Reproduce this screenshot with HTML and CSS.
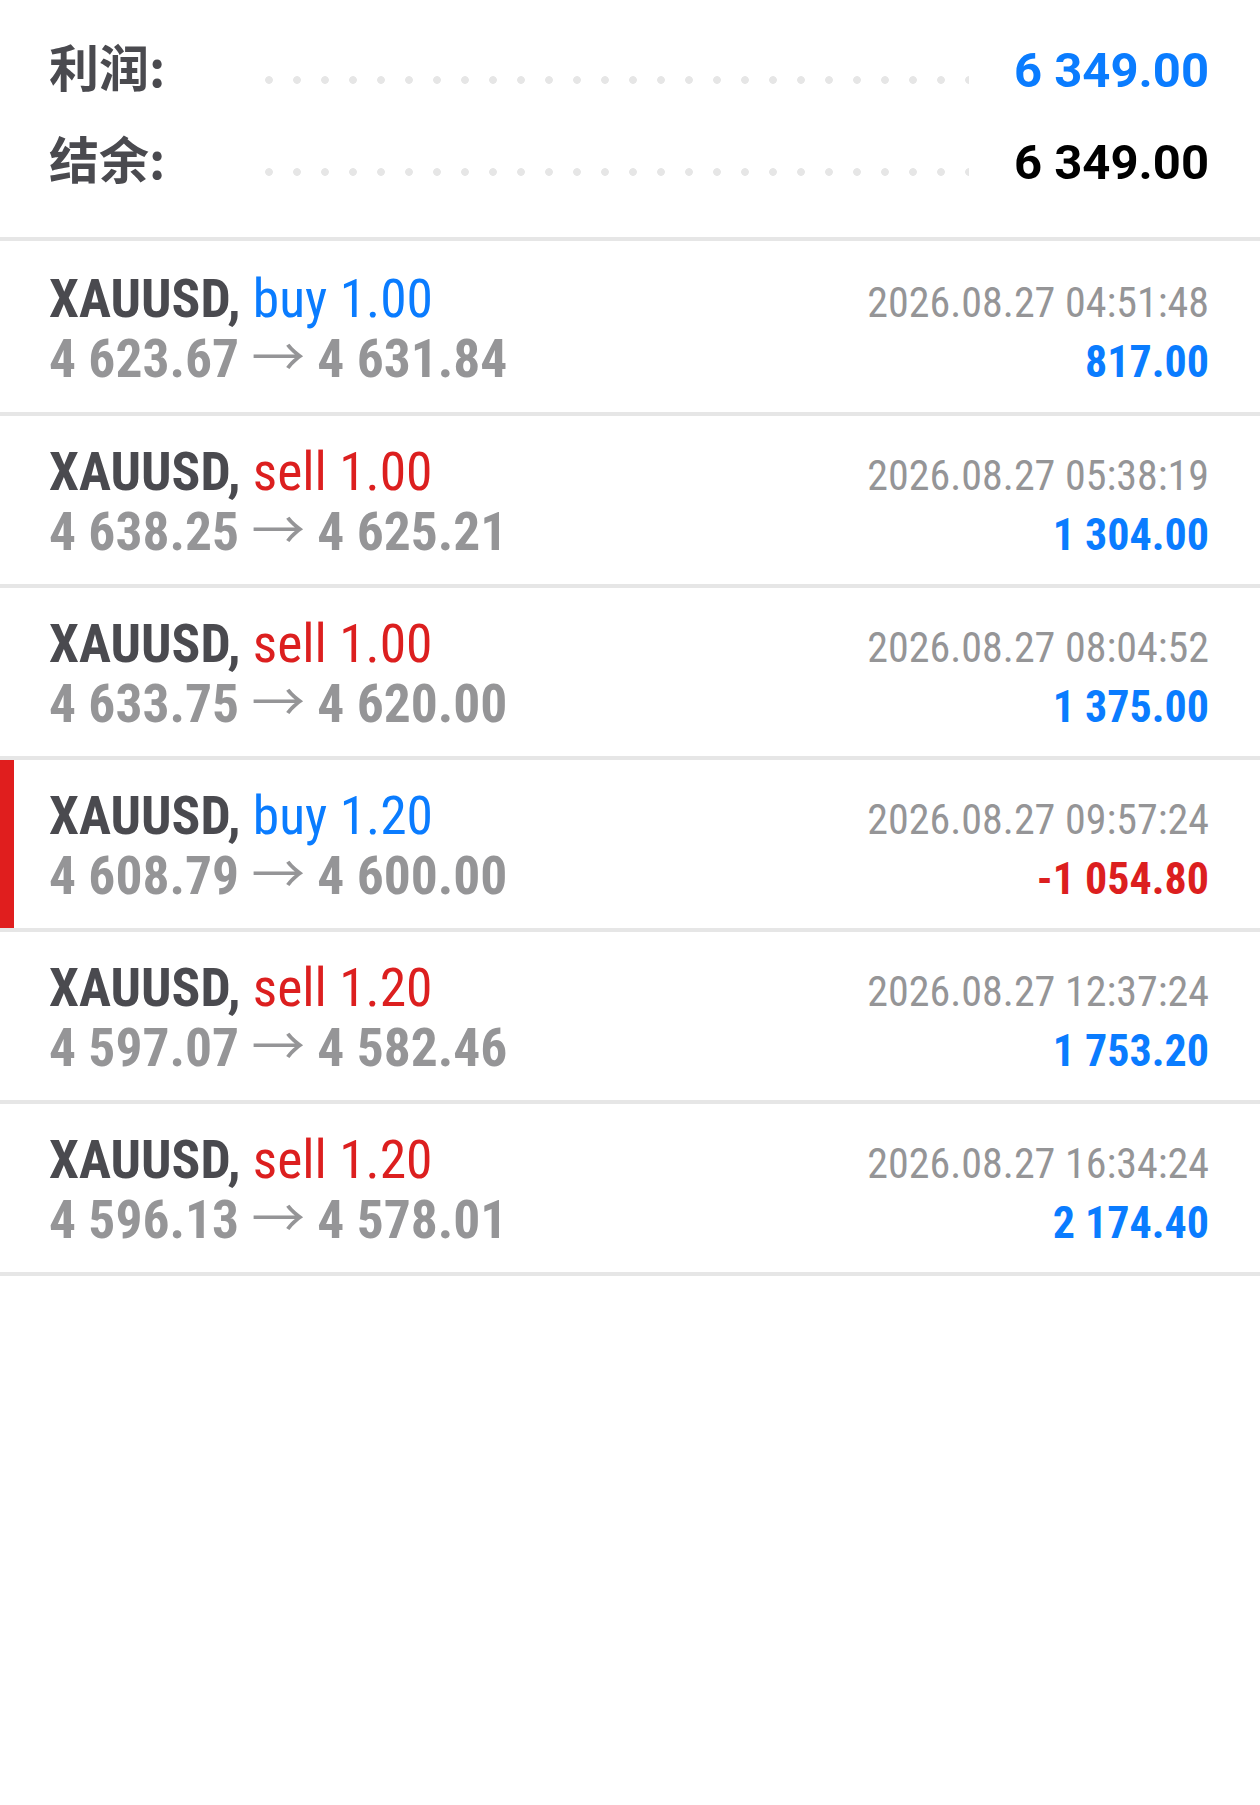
FILE: index.html
```html
<!DOCTYPE html>
<html lang="zh-CN">
<head>
  <meta charset="UTF-8" />
  <meta name="viewport" content="width=device-width, initial-scale=1.0"/>
  <title>交易历史</title>
  <link rel="stylesheet" href="styles.css">
</head>
<body>

  <div class="summary">
    <div class="summary-row">
      <span class="summary-label">利润:</span>
      <span class="dots"></span>
      <span class="summary-value blue">6 349.00</span>
    </div>
    <div class="summary-row">
      <span class="summary-label">结余:</span>
      <span class="dots"></span>
      <span class="summary-value">6 349.00</span>
    </div>
  </div>

  <div class="trades">
    <div class="trade">
      <div class="trade-title">XAUUSD, <span class="buy">buy 1.00</span></div>
      <div class="trade-time">2026.08.27 04:51:48</div>
      <div class="trade-prices">4 623.67 <span class="arrow">→</span> 4 631.84</div>
      <div class="trade-profit">817.00</div>
    </div>
    <div class="trade">
      <div class="trade-title">XAUUSD, <span class="sell">sell 1.00</span></div>
      <div class="trade-time">2026.08.27 05:38:19</div>
      <div class="trade-prices">4 638.25 <span class="arrow">→</span> 4 625.21</div>
      <div class="trade-profit">1 304.00</div>
    </div>
    <div class="trade">
      <div class="trade-title">XAUUSD, <span class="sell">sell 1.00</span></div>
      <div class="trade-time">2026.08.27 08:04:52</div>
      <div class="trade-prices">4 633.75 <span class="arrow">→</span> 4 620.00</div>
      <div class="trade-profit">1 375.00</div>
    </div>
    <div class="trade selected">
      <div class="trade-title">XAUUSD, <span class="buy">buy 1.20</span></div>
      <div class="trade-time">2026.08.27 09:57:24</div>
      <div class="trade-prices">4 608.79 <span class="arrow">→</span> 4 600.00</div>
      <div class="trade-profit loss">-1 054.80</div>
    </div>
    <div class="trade">
      <div class="trade-title">XAUUSD, <span class="sell">sell 1.20</span></div>
      <div class="trade-time">2026.08.27 12:37:24</div>
      <div class="trade-prices">4 597.07 <span class="arrow">→</span> 4 582.46</div>
      <div class="trade-profit">1 753.20</div>
    </div>
    <div class="trade">
      <div class="trade-title">XAUUSD, <span class="sell">sell 1.20</span></div>
      <div class="trade-time">2026.08.27 16:34:24</div>
      <div class="trade-prices">4 596.13 <span class="arrow">→</span> 4 578.01</div>
      <div class="trade-profit">2 174.40</div>
    </div>
  </div>

</body>
</html>
```

FILE: styles.css
```css
* {
  box-sizing: border-box;
  margin: 0;
  padding: 0;
}

body {
  background: #fff;
  font-family: Roboto, "Noto Sans CJK SC", sans-serif;
  color: #4a4a4f;
}

.summary {
  padding: 24px 51px 29px 49px;
  border-bottom: 4px solid #e6e6e6;
}

.summary-row {
  display: flex;
  align-items: center;
  height: 92px;
}

.summary-label {
  width: 216px;
  margin-bottom: 11px;
  font-family: "Noto Sans CJK SC", sans-serif;
  font-size: 50px;
  font-weight: bold;
  color: #4a4a4f;
}

.dots {
  flex: 1;
  height: 8px;
  margin: 20px 45px 0 0;
  background-image: radial-gradient(circle at 4px 4px, #e6e6e6 3.5px, transparent 4.2px);
  background-size: 28px 8px;
  background-repeat: repeat-x;
}

.summary-value {
  font-size: 49px;
  font-weight: bold;
  color: #000;
}

.blue {
  color: #0a7cff;
}

.trade {
  display: grid;
  grid-template-columns: 1fr auto;
  align-items: baseline;
  align-content: start;
  height: 172px;
  padding: 26px 51px 0 49px;
  border-bottom: 4px solid #e6e6e6;
  font-family: "Roboto Condensed", Roboto, sans-serif;
  line-height: 60px;
}

.trade:first-child {
  height: 175px;
  padding-top: 28px;
}

.trade.selected {
  box-shadow: inset 14px 0 0 #e01e1e;
}

.trade-title {
  font-size: 53.5px;
  font-weight: bold;
  color: #4a4a4f;
}

.trade-title span {
  font-weight: normal;
}

.buy {
  color: #0a7cff;
}

.sell {
  color: #dc1f1f;
}

.trade-prices {
  font-size: 53.5px;
  font-weight: bold;
  color: #959597;
}

/* arrow glyph comes from the CJK font, it is longer and thinner */
.arrow {
  font-family: "Noto Sans CJK SC", sans-serif;
  font-weight: normal;
  line-height: 0;
}

.trade-time {
  text-align: right;
  font-size: 42px;
  line-height: 42px;
  color: #959597;
}

.trade-profit {
  text-align: right;
  font-size: 44px;
  line-height: 44px;
  font-weight: bold;
  color: #0a7cff;
}

.trade-profit.loss {
  color: #dc1f1f;
}
```
